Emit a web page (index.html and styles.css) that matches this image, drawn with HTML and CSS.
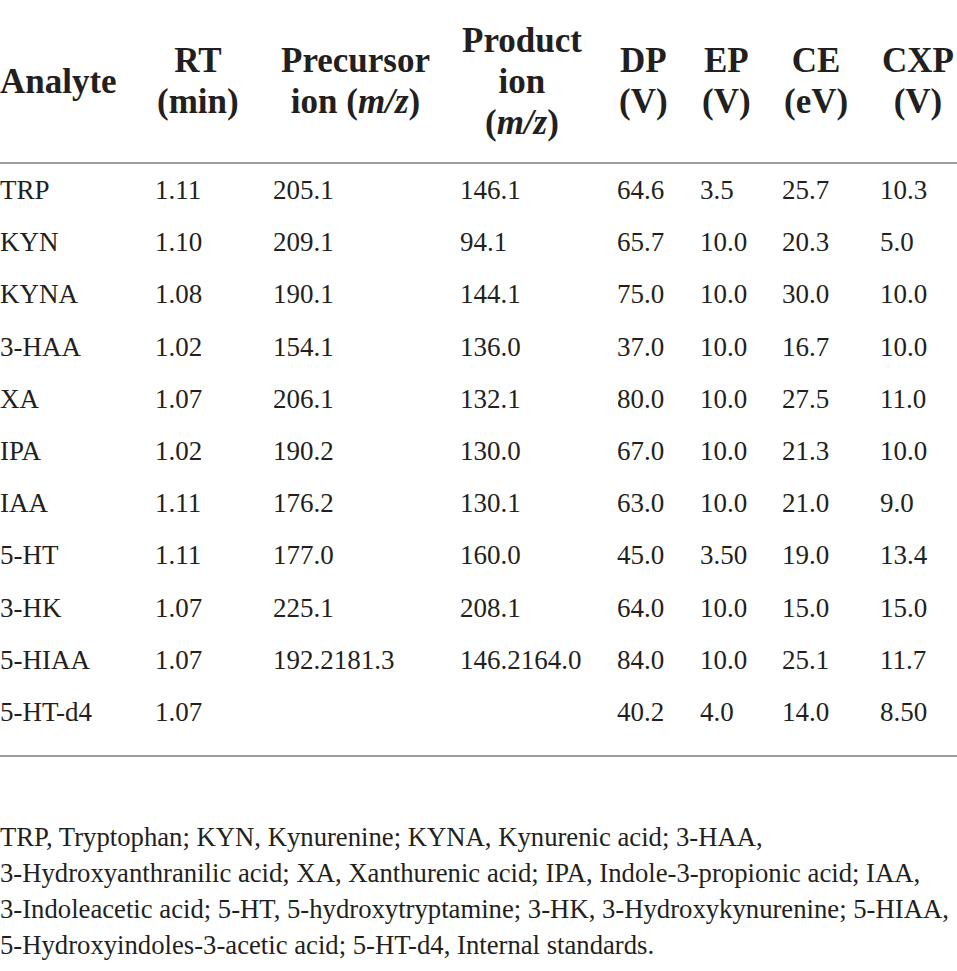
FILE: index.html
```html
<!DOCTYPE html>
<html lang="en">
<head>
<meta charset="utf-8">
<title>Table</title>
<link rel="stylesheet" href="styles.css">
</head>
<body>
<table class="data">
  <colgroup>
    <col class="c1"><col class="c2"><col class="c3"><col class="c4"><col class="c5"><col class="c6"><col class="c7"><col class="c8">
  </colgroup>
  <thead>
    <tr>
      <th><span class="h">Analyte</span></th>
      <th><span class="h">RT<br>(min)</span></th>
      <th class="pre"><span class="h">Precursor<br>ion (<i>m/z</i>)</span></th>
      <th><span class="h">Product<br>ion<br>(<i>m/z</i>)</span></th>
      <th><span class="h">DP<br>(V)</span></th>
      <th><span class="h">EP<br>(V)</span></th>
      <th><span class="h">CE<br>(eV)</span></th>
      <th><span class="h">CXP<br>(V)</span></th>
    </tr>
  </thead>
  <tbody>
    <tr class="first"><td>TRP</td><td>1.11</td><td>205.1</td><td>146.1</td><td>64.6</td><td>3.5</td><td>25.7</td><td>10.3</td></tr>
    <tr><td>KYN</td><td>1.10</td><td>209.1</td><td>94.1</td><td>65.7</td><td>10.0</td><td>20.3</td><td>5.0</td></tr>
    <tr><td>KYNA</td><td>1.08</td><td>190.1</td><td>144.1</td><td>75.0</td><td>10.0</td><td>30.0</td><td>10.0</td></tr>
    <tr><td>3-HAA</td><td>1.02</td><td>154.1</td><td>136.0</td><td>37.0</td><td>10.0</td><td>16.7</td><td>10.0</td></tr>
    <tr><td>XA</td><td>1.07</td><td>206.1</td><td>132.1</td><td>80.0</td><td>10.0</td><td>27.5</td><td>11.0</td></tr>
    <tr><td>IPA</td><td>1.02</td><td>190.2</td><td>130.0</td><td>67.0</td><td>10.0</td><td>21.3</td><td>10.0</td></tr>
    <tr><td>IAA</td><td>1.11</td><td>176.2</td><td>130.1</td><td>63.0</td><td>10.0</td><td>21.0</td><td>9.0</td></tr>
    <tr><td>5-HT</td><td>1.11</td><td>177.0</td><td>160.0</td><td>45.0</td><td>3.50</td><td>19.0</td><td>13.4</td></tr>
    <tr><td>3-HK</td><td>1.07</td><td>225.1</td><td>208.1</td><td>64.0</td><td>10.0</td><td>15.0</td><td>15.0</td></tr>
    <tr><td>5-HIAA</td><td>1.07</td><td>192.2181.3</td><td>146.2164.0</td><td>84.0</td><td>10.0</td><td>25.1</td><td>11.7</td></tr>
    <tr class="last"><td>5-HT-d4</td><td>1.07</td><td></td><td></td><td>40.2</td><td>4.0</td><td>14.0</td><td>8.50</td></tr>
  </tbody>
</table>
<p class="note">TRP, Tryptophan; KYN, Kynurenine; KYNA, Kynurenic acid; 3-HAA,<br>3-Hydroxyanthranilic acid; XA, Xanthurenic acid; IPA, Indole-3-propionic acid; IAA,<br>3-Indoleacetic acid; 5-HT, 5-hydroxytryptamine; 3-HK, 3-Hydroxykynurenine; 5-HIAA,<br>5-Hydroxyindoles-3-acetic acid; 5-HT-d4, Internal standards.</p>
</body>
</html>
```

FILE: styles.css
```css
html, body {
  margin: 0;
  padding: 0;
  background: #ffffff;
}
body {
  font-family: "Liberation Serif", "Times New Roman", serif;
  color: #231f20;
  width: 957px;
}
.data {
  width: 957px;
  border-collapse: collapse;
  table-layout: fixed;
}
.c1 { width: 155px; }
.c2 { width: 118px; }
.c3 { width: 187px; }
.c4 { width: 157px; }
.c5 { width: 83px; }
.c6 { width: 82px; }
.c7 { width: 98px; }
.c8 { width: 77px; }
.data thead tr {
  height: 163px;
}
.data th {
  padding: 0 0 0 2px;
  text-align: left;
  vertical-align: middle;
  font-weight: bold;
  font-size: 35px;
  line-height: 41px;
  border-bottom: 2px solid #9d9d9d;
  white-space: nowrap;
}
.data th:first-child {
  padding-left: 0;
}
.data th.pre {
  padding-left: 8px;
}
.h {
  display: inline-block;
  text-align: center;
}
.data td {
  padding: 0;
  height: 52.2px;
  font-size: 27px;
  line-height: 52px;
  vertical-align: middle;
  white-space: nowrap;
}
.data tr.last td {
  border-bottom: 2px solid #9d9d9d;
}
.data tbody tr.last {
  height: 70px;
}
.data tr.last td {
  vertical-align: top;
}
.note {
  margin: 62px 0 0 0;
  font-size: 26.7px;
  line-height: 36px;
}
```
